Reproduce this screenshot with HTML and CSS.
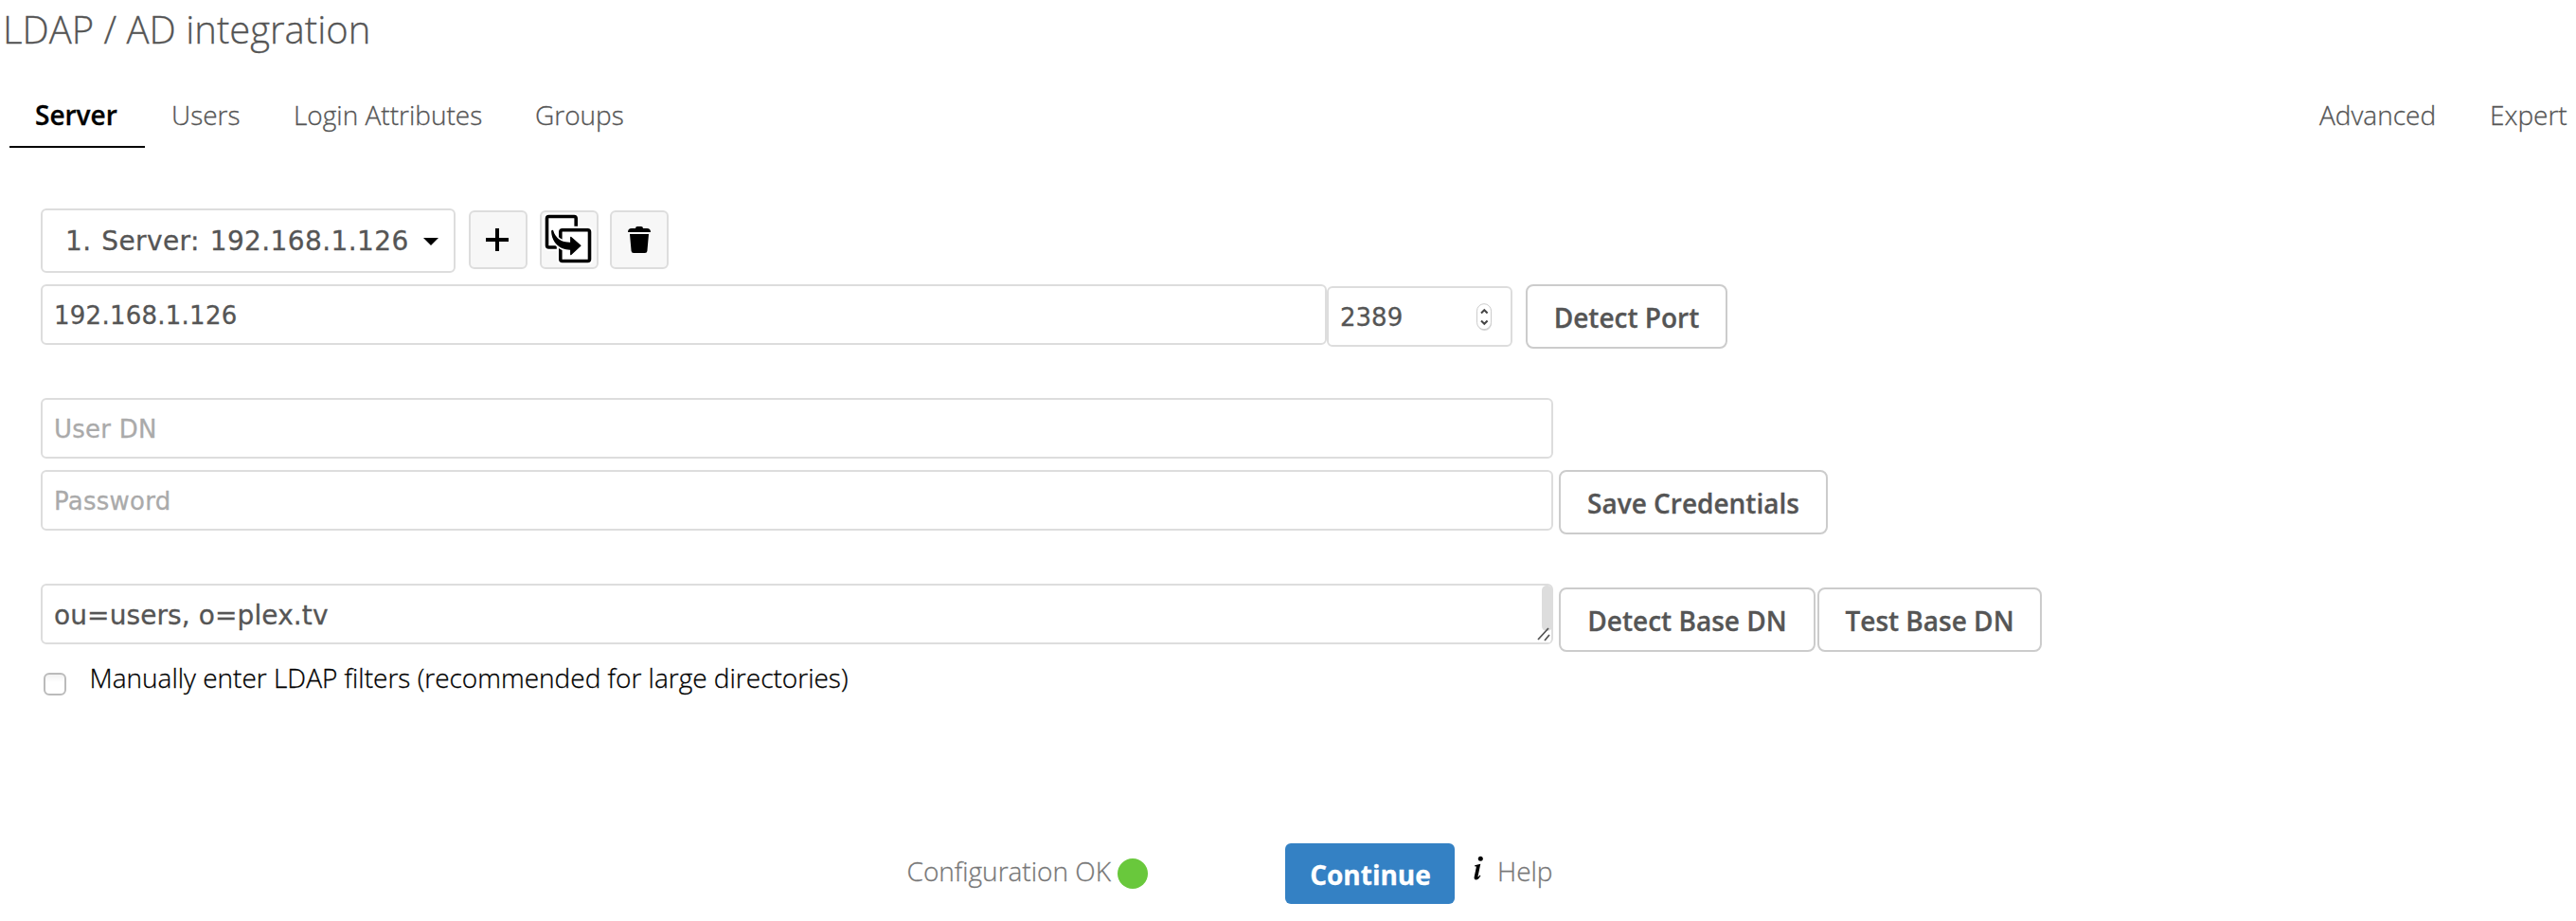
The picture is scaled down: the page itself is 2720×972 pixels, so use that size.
FILE: index.html
```html
<!DOCTYPE html>
<html lang="en">
<head>
<meta charset="utf-8">
<title>LDAP / AD integration</title>
<link rel="stylesheet" href="styles.css">
</head>
<body>
<h2 class="title">LDAP / AD integration</h2>
<nav class="tabs">
  <a class="tab active">Server</a>
  <a class="tab users">Users</a>
  <a class="tab login">Login Attributes</a>
  <a class="tab groups">Groups</a>
  <a class="tab advanced">Advanced</a>
  <a class="tab expert">Expert</a>
</nav>
<main class="panel">
  <div class="row server-row">
    <div class="select"><span>1. Server: 192.168.1.126</span><i class="caret"></i></div>
    <button class="icon-btn" aria-label="Add"><svg width="58" height="58" viewBox="0 0 58 58"><path d="M26 17h4v10h10v4H30v10h-4V31H16v-4h10z"/></svg></button>
    <button class="icon-btn" aria-label="Copy"><svg width="58" height="58" viewBox="0 0 58 58">
      <g fill="#fff" stroke="#fff" stroke-width="7" stroke-linejoin="round"><rect x="5.500" y="4.500" width="30.700" height="32.500" rx="2"/><rect x="19.800" y="18.800" width="30.700" height="32.700" rx="2"/></g>
      <rect x="5.500" y="4.500" width="30.700" height="32.500" rx="2" fill="#fff" stroke="#000" stroke-width="3.600"/>
      <rect x="19.800" y="18.800" width="30.700" height="32.700" rx="2" fill="#fff" stroke="#fff" stroke-width="8"/>
      <rect x="19.800" y="18.800" width="30.700" height="32.700" rx="2" fill="#fff" stroke="#000" stroke-width="3.600"/>
      <path d="M11.500 19.500C13.500 27 20 33 30.800 32.500V26.500L40.800 35.300 30.800 44.500V39C19 39.500 11 31 10.800 19.800z" stroke="#fff" stroke-width="4.500" stroke-linejoin="round"/>
      <path d="M11.500 19.500C13.500 27 20 33 30.800 32.500V26.500L40.800 35.300 30.800 44.500V39C19 39.500 11 31 10.800 19.800z" stroke="#000" stroke-width="1.400" stroke-linejoin="round"/>
    </svg></button>
    <button class="icon-btn" aria-label="Delete"><svg width="58" height="58" viewBox="0 0 58 58"><path d="M17 21q0-4 4-4h4q0-2 2-2h4q2 0 2 2h4q4 0 4 4zM19 23h20l-1.600 18q-.2 2-2.400 2H23q-2.200 0-2.400-2z"/></svg></button>
  </div>
  <div class="row host-row">
    <input class="field host" type="text" value="192.168.1.126">
    <div class="port"><input class="field" type="text" value="2389">
      <svg class="spinner" width="18" height="32" viewBox="0 0 18 32"><rect x="2" y="2" width="15" height="27" rx="7.500" fill="#bbb" opacity=".6"/><rect x="1.500" y=".7" width="15" height="27" rx="7.500" fill="#fff" stroke="#ccc"/><path d="M6 10.500l3.300-3.300 3.300 3.300M6 18.500l3.300 3.300 3.300-3.300" fill="none" stroke="#444" stroke-width="2"/></svg>
    </div>
    <button class="btn detect-port"><span>Detect Port</span></button>
  </div>
  <div class="row dn-row"><input class="field wide" type="text" placeholder="User DN"></div>
  <div class="row pass-row">
    <input class="field wide" type="password" placeholder="Password">
    <button class="btn save"><span>Save Credentials</span></button>
  </div>
  <div class="row base-row">
    <div class="base"><textarea class="field wide">ou=users, o=plex.tv</textarea>
      <i class="thumb"></i>
      <svg class="grip" width="14" height="16" viewBox="0 0 14 16"><path d="M5 7h9v9H5z" fill="#fff"/><path d="M1 13L12 1M8 14l5-6" stroke="#555" stroke-width="1.800" fill="none"/></svg>
    </div>
    <button class="btn detect-base"><span>Detect Base DN</span></button>
    <button class="btn test-base"><span>Test Base DN</span></button>
  </div>
  <label class="check-row"><input class="check" type="checkbox"><span>Manually enter LDAP filters (recommended for large directories)</span></label>
</main>
<footer class="footer">
  <span class="status">Configuration OK</span><i class="dot"></i>
  <button class="continue"><span>Continue</span></button>
  <svg class="info" width="14" height="28" viewBox="0 0 14 28"><circle cx="9.300" cy="3.200" r="2.500"/><path d="M3.200 10.300L9.300 8.700 6.600 21.500c-.3 1.600.5 1.300 2-.9l.8.600C7.900 24 6.400 25.500 4.500 25.500c-1.700 0-2.200-1.400-1.800-3.300l1.900-8.900c.4-2 .1-2.300-1.600-1.900z"/></svg>
  <a class="help">Help</a>
</footer>
</body>
</html>
```
FILE: styles.css
```css
* { box-sizing: border-box; }
body {
  margin: 0;
  width: 2720px;
  height: 972px;
  overflow: hidden;
  background: #fff;
  color: #555;
  font: 300 28px/40px "Open Sans", sans-serif;
  -webkit-text-stroke: .3px currentColor;
}
.title { margin: 0; padding-left: 3px; height: 101px; font-size: 40px; line-height: 61px; font-weight: 300; white-space: nowrap; }
.tabs { display: flex; height: 55px; padding-left: 10px; white-space: nowrap; }
.tab { height: 55px; }
.active { width: 143px; padding-left: 27px; color: #000; font-weight: 600; border-bottom: 2px solid #000; }
.users { width: 129px; margin-left: 28px; }
.login { width: 255px; }
.groups { width: 100px; }
.advanced { margin-left: auto; width: 180px; }
.expert { width: 91px; }

.panel { padding: 64px 0 0 43px; }
.row { display: flex; align-items: flex-start; }
.select {
  display: flex; width: 438px; height: 68px; padding: 2px 16px 0 24px; margin-right: 14px;
  align-items: center; justify-content: space-between;
  border: 2px solid #ddd; border-radius: 6px;
  font: 400 28px/40px "DejaVu Sans", sans-serif; letter-spacing: .4px; word-spacing: 1.5px; white-space: nowrap;
}
.caret { border: 8px solid transparent; border-top-color: #000; border-bottom: 0; }
.icon-btn {
  width: 62px; height: 62px; margin: 2px 12.500px 0 0; padding: 0;
  border: 2px solid #ddd; border-radius: 6px; background: #f7f7f7;
}
.icon-btn svg { display: block; }
.host-row { margin-top: 12px; }
.field {
  display: block; height: 64px; margin: 0; padding: 1px 12px 0;
  border: 2px solid #ddd; border-radius: 6px; outline: 0; background: #fff; color: #555;
  font: 400 26px/40px "DejaVu Sans", sans-serif; letter-spacing: .25px;
}
.field::placeholder { color: #aaa; opacity: 1; }
.host { width: 1358px; }
.port { position: relative; margin-top: 2px; }
.port .field { width: 196px; letter-spacing: 0; }
.spinner { position: absolute; left: 157px; top: 18px; }
.btn {
  height: 68px; margin: 0; padding: 2px 0 0; border: 2px solid #ccc; border-radius: 8px;
  background: #fff; color: #555; font: 600 28px/40px "Open Sans", sans-serif; white-space: nowrap;
}
.detect-port { width: 213px; margin-left: 14px; }
.dn-row { margin-top: 52px; }
.wide { width: 1597px; }
.pass-row { margin-top: 12px; }
.save { width: 284px; margin-left: 6px; }
.base-row { margin-top: 52px; }
.base { position: relative; }
textarea.field { padding-top: 12px; resize: none; overflow: hidden; font-size: 28px; letter-spacing: .1px; }
.thumb { position: absolute; left: 1585px; top: 2px; width: 11px; height: 48px; border-radius: 5px; background: #ddd; }
.grip { position: absolute; right: 3px; bottom: 2px; }
.detect-base { width: 271px; margin: 4px 0 0 6px; }
.test-base { width: 237px; margin: 4px 0 0 2px; }
.check-row { display: flex; width: 900px; height: 50px; margin-top: 7px; padding-left: 3px; color: #000; white-space: nowrap; }
.check {
  appearance: none; width: 24px; height: 24px; margin: 15px 24.500px 0 0;
  border: 2px solid #bbb; border-radius: 6px; background: linear-gradient(#f2f2f2, #fff 40%);
}
.footer { display: flex; align-items: flex-start; margin-top: 145px; padding-left: 957.500px; color: #777; white-space: nowrap; }
.status { width: 222.500px; margin-top: 9px; }
.dot { width: 32px; height: 32px; margin-top: 16px; border-radius: 50%; background: #69c83c; }
.continue {
  width: 179px; height: 64px; margin: 0 0 0 145px; padding: 2px 0 0 1px; border: 0; border-radius: 6px;
  background: #3481c4; color: #fff; font: 700 28px/40px "Open Sans", sans-serif;
}
.info { margin: 13px 0 0 18px; fill: #000; }
.help { margin: 9px 0 0 13px; }
```
